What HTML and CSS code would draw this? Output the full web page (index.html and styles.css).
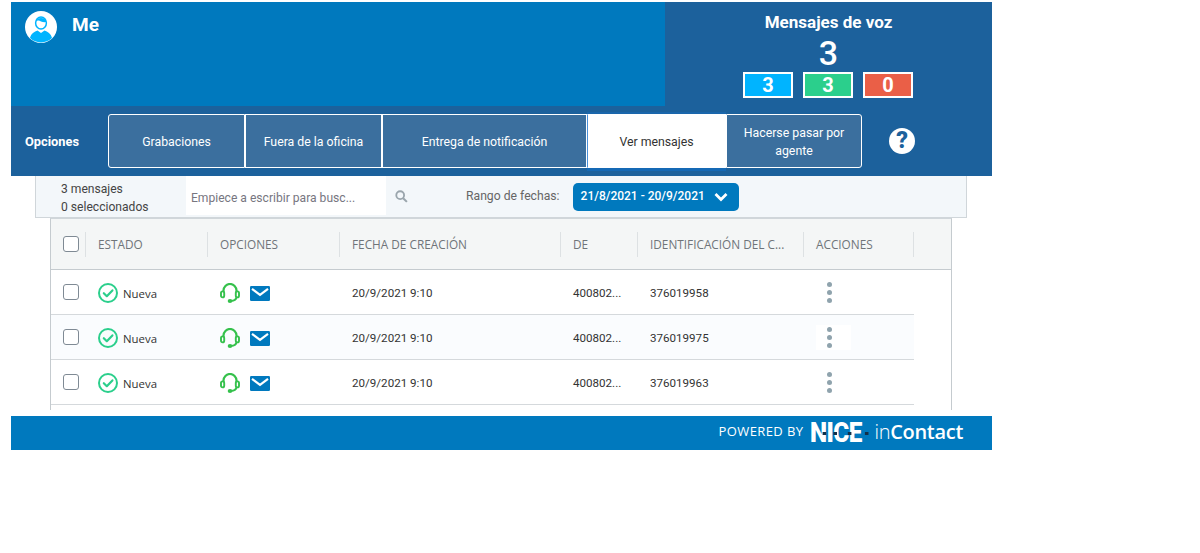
FILE: index.html
```html
<!DOCTYPE html>
<html lang="es">
<head>
    <meta charset="UTF-8">
    <title>Mensajes de voz</title>
    <link rel="stylesheet" href="styles.css">
</head>
<body>
    <svg class="defs" width="0" height="0">
        <symbol id="ico-check" viewBox="0 0 20 20">
            <circle cx="10" cy="10" r="9" fill="none" stroke="#2bcf8c" stroke-width="2"/>
            <path d="M5.800 10.200l3 3 5.600-5.800" fill="none" stroke="#2bcf8c" stroke-width="2.200" stroke-linecap="round" stroke-linejoin="round"/>
        </symbol>
        <symbol id="ico-headset" viewBox="0 0 20 20">
            <path d="M3.500 9V7.500a6.500 6.500 0 0 1 13 0V9" fill="none" stroke="#35c14c" stroke-width="2.200"/>
            <rect x="1" y="8.400" width="3.200" height="6" rx="1.600" fill="none" stroke="#35c14c" stroke-width="1.900"/>
            <rect x="15.800" y="8.400" width="3.200" height="6" rx="1.600" fill="none" stroke="#35c14c" stroke-width="1.900"/>
            <path d="M16.500 14.500c-.5 2-2.500 3.300-5.500 3.500" fill="none" stroke="#35c14c" stroke-width="2"/>
            <ellipse cx="10" cy="18" rx="2.300" ry="1.900" fill="#35c14c"/>
        </symbol>
        <symbol id="ico-mail" viewBox="0 0 20 15">
            <rect width="20" height="15" rx="1.200" fill="#0079be"/>
            <path d="M2 2.800l8 6 8-6" fill="none" stroke="#fff" stroke-width="2.200"/>
        </symbol>
    </svg>

    <div class="app">
        <div class="top">
            <div class="top-main">
                <div class="me">
                    <svg class="avatar" viewBox="0 0 32 32">
                        <circle cx="16" cy="16" r="16" fill="#fff"/>
                        <path d="M5 27c1-4.500 4.500-6.500 7.500-7.500l3.500 2.500 3.500-2.500c3 1 6.500 3 7.500 7.500a16 16 0 0 1-22 0z" fill="#00b4ff"/>
                        <ellipse cx="16" cy="12" rx="5.400" ry="6" fill="none" stroke="#00b4ff" stroke-width="1.500"/>
                        <path d="M10.600 11c1.500-1.500 3-2 5.400-.5 2 .8 4 .7 5.400.5-.5-5.500-10.300-5.500-10.800 0z" fill="#00b4ff"/>
                    </svg>
                    <span class="me-name">Me</span>
                </div>
            </div>
            <div class="top-stats">
                <div class="stats-title">Mensajes de voz</div>
                <div class="stats-total">3</div>
                <div class="stats-boxes">
                    <span class="stat-box stat-blue">3</span>
                    <span class="stat-box stat-green">3</span>
                    <span class="stat-box stat-red">0</span>
                </div>
            </div>
        </div>

        <div class="options">
            <div class="options-label">Opciones</div>
            <div class="tabs">
                <div class="tab tab-rec">Grabaciones</div>
                <div class="tab tab-out">Fuera de la oficina</div>
                <div class="tab tab-notif">Entrega de notificación</div>
                <div class="tab tab-view active">Ver mensajes</div>
                <div class="tab tab-agent">Hacerse pasar por agente</div>
            </div>
            <div class="help">?</div>
        </div>

        <div class="toolbar">
            <div class="counts">
                <div>3 mensajes</div>
                <div>0 seleccionados</div>
            </div>
            <div class="search">Empiece a escribir para busc...</div>
            <svg class="search-ico" viewBox="0 0 14 14">
                <circle cx="5.600" cy="5.600" r="4.200" fill="none" stroke="#9aa5ac" stroke-width="2"/>
                <path d="M8.800 8.800l4 4" stroke="#9aa5ac" stroke-width="2.200"/>
            </svg>
            <div class="range-label">Rango de fechas:</div>
            <div class="range-btn">
                <span>21/8/2021 - 20/9/2021</span>
                <svg class="chevron" viewBox="0 0 14 10">
                    <path d="M1.500 2l5.500 5.500L12.500 2" fill="none" stroke="#fff" stroke-width="2.800"/>
                </svg>
            </div>
        </div>

        <div class="table">
            <div class="thead">
                <div class="th th-check"><span class="checkbox"></span></div>
                <div class="th">ESTADO</div>
                <div class="th">OPCIONES</div>
                <div class="th">FECHA DE CREACIÓN</div>
                <div class="th">DE</div>
                <div class="th">IDENTIFICACIÓN DEL C...</div>
                <div class="th">ACCIONES</div>
                <div class="th"></div>
            </div>

            <div class="row">
                <div class="cell cell-check"><span class="checkbox"></span></div>
                <div class="cell cell-status"><svg class="ico-status"><use href="#ico-check"/></svg><span>Nueva</span></div>
                <div class="cell cell-opts"><svg class="ico-head"><use href="#ico-headset"/></svg><svg class="ico-mail"><use href="#ico-mail"/></svg></div>
                <div class="cell">20/9/2021 9:10</div>
                <div class="cell">400802...</div>
                <div class="cell">376019958</div>
                <div class="cell cell-actions"><div class="dots"><i></i><i></i><i></i></div></div>
            </div>
            <div class="row row-alt">
                <div class="cell cell-check"><span class="checkbox"></span></div>
                <div class="cell cell-status"><svg class="ico-status"><use href="#ico-check"/></svg><span>Nueva</span></div>
                <div class="cell cell-opts"><svg class="ico-head"><use href="#ico-headset"/></svg><svg class="ico-mail"><use href="#ico-mail"/></svg></div>
                <div class="cell">20/9/2021 9:10</div>
                <div class="cell">400802...</div>
                <div class="cell">376019975</div>
                <div class="cell cell-actions"><div class="dots dots-hover"><i></i><i></i><i></i></div></div>
            </div>
            <div class="row">
                <div class="cell cell-check"><span class="checkbox"></span></div>
                <div class="cell cell-status"><svg class="ico-status"><use href="#ico-check"/></svg><span>Nueva</span></div>
                <div class="cell cell-opts"><svg class="ico-head"><use href="#ico-headset"/></svg><svg class="ico-mail"><use href="#ico-mail"/></svg></div>
                <div class="cell">20/9/2021 9:10</div>
                <div class="cell">400802...</div>
                <div class="cell">376019963</div>
                <div class="cell cell-actions"><div class="dots"><i></i><i></i><i></i></div></div>
            </div>
        </div>

        <div class="footer">
            <span class="powered">POWERED BY</span>
            <span class="logo-nice">NICE<i class="mark mark-a"></i><i class="mark mark-b"></i><i class="mark mark-c"></i><i class="mark mark-d"></i></span>
            <span class="logo-contact"><span class="logo-in">in</span>Contact</span>
        </div>
    </div>
</body>
</html>
```

FILE: styles.css
```css
html, body {
    margin: 0;
    padding: 0;
    background-color: white;
}

body {
    padding: 2px 0 0 11px;
    font-family: 'Roboto', 'Liberation Sans', sans-serif;
    overflow: hidden;
}

.defs {
    position: absolute;
}

.app {
    width: 981px;
    height: 448px;
}

/* top area */
.top {
    display: flex;
    height: 104px;
    background-color: #1c619c;
}

.top-main {
    width: 654px;
    background-color: #0079be;
}

.me {
    display: flex;
    align-items: flex-start;
    padding: 9px 0 0 14px;
    color: white;
}

.avatar {
    width: 32px;
    height: 32px;
}

.me-name {
    margin: 3px 0 0 15px;
    font-size: 19px;
    line-height: 22px;
    font-weight: 700;
}

.top-stats {
    flex: 1;
    display: flex;
    flex-direction: column;
    align-items: center;
    color: white;
}

.stats-title {
    margin-top: 10px;
    font-size: 17px;
    line-height: 20px;
    font-weight: 700;
}

.stats-total {
    margin-bottom: 1px;
    padding-top: 4px;
    font-size: 34px;
    line-height: 35px;
    font-weight: 500;
}

.stats-boxes {
    display: flex;
    gap: 10px;
    margin-right: 2px;
}

.stat-box {
    box-sizing: border-box;
    width: 50px;
    height: 26px;
    padding-left: 1px;
    border: 2px solid white;
    text-align: center;
    font-size: 20px;
    line-height: 22px;
    font-weight: 700;
}

.stat-blue {
    background-color: #00b4ff;
}

.stat-green {
    background-color: #2bcf8c;
}

.stat-red {
    background-color: #ea5f47;
}

/* options bar */
.options {
    display: flex;
    height: 70px;
    box-sizing: border-box;
    padding-top: 8px;
    background-color: #1c619c;
}

.options-label {
    width: 97px;
    padding-left: 14px;
    box-sizing: border-box;
    color: white;
    font-size: 12.800px;
    line-height: 55px;
    font-weight: 700;
}

.tabs {
    display: flex;
    height: 54px;
}

.tab {
    box-sizing: border-box;
    display: flex;
    align-items: center;
    justify-content: center;
    padding: 1px 12px 0;
    background-color: #3b6f9e;
    border: 1px solid white;
    color: white;
    font-size: 12.300px;
    line-height: 18px;
    text-align: center;
}

.tab-rec {
    width: 137px;
    border-radius: 3px 0 0 3px;
}

.tab-out {
    width: 137px;
}

.tab-notif {
    width: 205px;
}

.tab-view {
    width: 139px;
}

.tab-agent {
    width: 136px;
    border-radius: 0 3px 3px 0;
}

.tab.active {
    background-color: white;
    border-color: white;
    border-left-color: #4a90d9;
    box-shadow: 0 -2px 0 #1a66ab, 0 3px 0 #1569b5;
    color: #333;
}

.help {
    width: 26px;
    height: 26px;
    margin: 14px 0 0 27px;
    border-radius: 50%;
    background-color: white;
    color: #1c619c;
    text-align: center;
    font-size: 23px;
    line-height: 26px;
    font-weight: 900;
}

/* toolbar */
.toolbar {
    display: flex;
    align-items: center;
    box-sizing: border-box;
    width: 932px;
    height: 42px;
    margin-left: 24px;
    background-color: #f3f7fa;
    border: 1px solid #d0d6da;
    border-top: none;
    font-size: 12.200px;
    color: #666;
}

.counts {
    width: 150px;
    box-sizing: border-box;
    padding: 3px 0 0 25px;
    color: #444;
    font-size: 12.100px;
    line-height: 18px;
}

.search {
    align-self: flex-start;
    width: 200px;
    height: 39px;
    box-sizing: border-box;
    padding-left: 5px;
    background-color: white;
    color: #77767f;
    font-size: 12.100px;
    line-height: 44px;
}

.search-ico {
    width: 13px;
    height: 13px;
    margin-left: 9px;
}

.range-label {
    margin-left: 58px;
    padding-bottom: 1px;
}

.range-btn {
    display: flex;
    align-items: center;
    box-sizing: border-box;
    width: 166px;
    height: 28px;
    margin: 1px 0 0 13px;
    padding: 0 0 2px 8px;
    border-radius: 5px;
    background-color: #0079be;
    color: white;
    font-size: 12px;
    font-weight: 500;
}

.chevron {
    width: 14px;
    height: 10px;
    margin: 2px 0 0 9px;
}

/* table */
.table {
    box-sizing: border-box;
    width: 902px;
    height: 192px;
    margin-left: 39px;
    border-left: 1px solid #c5cbcf;
    border-right: 1px solid #c5cbcf;
    border-top: 1px solid #d0d6da;
    overflow: hidden;
    font-size: 11.600px;
}

.thead, .row {
    display: grid;
    grid-template-columns: 35px 122px 132px 221px 77px 166px 110px;
}

.thead {
    grid-template-columns: 35px 122px 132px 221px 77px 166px 110px 38px;
    box-sizing: border-box;
    height: 51px;
    align-items: center;
    background-color: #f4f6f6;
    border-bottom: 1px solid #c5cbcf;
    font-family: 'Open Sans', sans-serif;
    font-size: 11.800px;
    color: #6f7479;
}

.th {
    box-sizing: border-box;
    height: 25px;
    padding-left: 12px;
    border-right: 1px solid #dde1e3;
    line-height: 25px;
}

.th:last-child {
    border-right: none;
}

.th-check {
    display: flex;
    align-items: center;
}

.row {
    box-sizing: border-box;
    width: 863px;
    height: 45px;
    align-items: center;
    border-bottom: 1px solid #d5d9dc;
    color: #333;
}

.row-alt {
    background-color: #fafcfe;
}

.cell {
    padding: 2px 0 0 12px;
}

.cell-check {
    display: flex;
    padding-top: 0;
}

.checkbox {
    box-sizing: border-box;
    display: block;
    width: 16px;
    height: 16px;
    border: 1px solid #7f8a94;
    border-radius: 3px;
    background-color: white;
}

.cell-status {
    display: flex;
    align-items: center;
    font-family: 'Open Sans', sans-serif;
    font-size: 11.400px;
}

.ico-status {
    width: 20px;
    height: 20px;
    margin-right: 5px;
}

.cell-opts {
    display: flex;
    align-items: center;
}

.ico-head {
    width: 20px;
    height: 20px;
}

.ico-mail {
    width: 20px;
    height: 15px;
    margin-left: 10px;
}

.cell-actions {
    align-self: stretch;
    display: flex;
    align-items: center;
    padding-top: 0;
}

.dots {
    display: flex;
    flex-direction: column;
    gap: 3px;
    box-sizing: border-box;
    width: 35px;
    height: 25px;
    justify-content: center;
    padding-left: 11px;
}

.dots i {
    display: block;
    width: 5px;
    height: 5px;
    border-radius: 50%;
    background-color: #8fa3ad;
}

.dots-hover {
    background-color: white;
}

/* footer */
.footer {
    display: flex;
    align-items: center;
    justify-content: flex-end;
    box-sizing: border-box;
    height: 34px;
    margin-top: 6px;
    padding: 0 29px 4px 0;
    background-color: #0079be;
    color: white;
}

.powered {
    font-family: 'Open Sans', sans-serif;
    font-size: 13px;
    letter-spacing: 0.400px;
}

.logo-nice {
    position: relative;
    width: 64px;
    margin: 3px 0 0 7px;
    font-family: 'Roboto', sans-serif;
    font-size: 27px;
    line-height: 26px;
    font-weight: 900;
    letter-spacing: -0.600px;
    transform: scaleX(0.9);
    transform-origin: left center;
}

.mark {
    position: absolute;
    top: 12px;
    width: 4px;
    height: 3px;
    background-color: #12304a;
}

.mark-a {
    left: 14px;
}

.mark-b {
    left: 26px;
}

.mark-c {
    left: 42px;
}

.mark-d {
    left: 61px;
}

.logo-contact {
    font-family: 'Open Sans', sans-serif;
    font-size: 20px;
    font-weight: 600;
    letter-spacing: -0.300px;
}

.logo-in {
    font-weight: 300;
}
```
